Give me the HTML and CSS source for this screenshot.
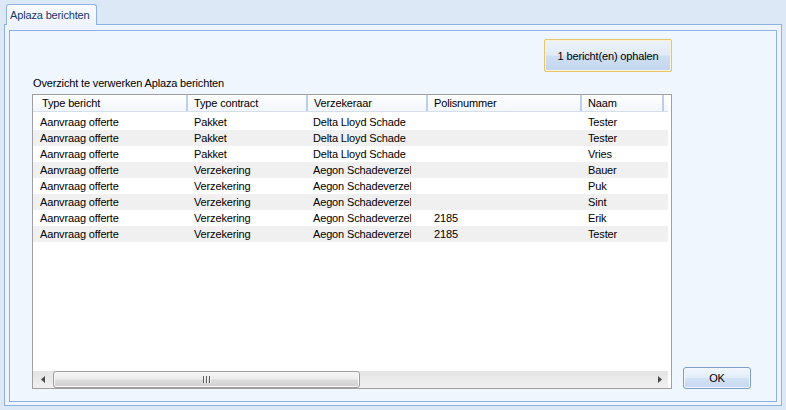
FILE: index.html
```html
<!DOCTYPE html>
<html>
<head>
<meta charset="utf-8">
<link rel="stylesheet" href="styles.css">
</head>
<body>
<div class="tabstrip"><div class="tab">Aplaza berichten</div></div>
<div class="tabpage">
  <div class="frame">
    <div class="main">
      <div class="toprow"><button class="btn btn-fetch">1 bericht(en) ophalen</button></div>
      <div class="label">Overzicht te verwerken Aplaza berichten</div>
      <div class="list">
        <div class="header">
          <div class="hcell c1">Type bericht</div>
          <div class="hcell">Type contract</div>
          <div class="hcell">Verzekeraar</div>
          <div class="hcell">Polisnummer</div>
          <div class="hcell">Naam</div>
        </div>
        <div class="rows">
          <div class="row"><div class="cell c1">Aanvraag offerte</div><div class="cell">Pakket</div><div class="cell c3">Delta Lloyd Schade</div><div class="cell"></div><div class="cell">Tester</div></div>
          <div class="row alt"><div class="cell c1">Aanvraag offerte</div><div class="cell">Pakket</div><div class="cell c3">Delta Lloyd Schade</div><div class="cell"></div><div class="cell">Tester</div></div>
          <div class="row"><div class="cell c1">Aanvraag offerte</div><div class="cell">Pakket</div><div class="cell c3">Delta Lloyd Schade</div><div class="cell"></div><div class="cell">Vries</div></div>
          <div class="row alt"><div class="cell c1">Aanvraag offerte</div><div class="cell">Verzekering</div><div class="cell c3">Aegon Schadeverzekeringen</div><div class="cell"></div><div class="cell">Bauer</div></div>
          <div class="row"><div class="cell c1">Aanvraag offerte</div><div class="cell">Verzekering</div><div class="cell c3">Aegon Schadeverzekeringen</div><div class="cell"></div><div class="cell">Puk</div></div>
          <div class="row alt"><div class="cell c1">Aanvraag offerte</div><div class="cell">Verzekering</div><div class="cell c3">Aegon Schadeverzekeringen</div><div class="cell"></div><div class="cell">Sint</div></div>
          <div class="row"><div class="cell c1">Aanvraag offerte</div><div class="cell">Verzekering</div><div class="cell c3">Aegon Schadeverzekeringen</div><div class="cell">2185</div><div class="cell">Erik</div></div>
          <div class="row alt"><div class="cell c1">Aanvraag offerte</div><div class="cell">Verzekering</div><div class="cell c3">Aegon Schadeverzekeringen</div><div class="cell">2185</div><div class="cell">Tester</div></div>
        </div>
        <div class="hscroll">
          <div class="sb-btn sb-left"><svg width="4" height="7" viewBox="0 0 4 7"><path d="M4 0 L0 3.5 L4 7 Z" fill="#4a4a4a"/></svg></div>
          <div class="sb-track">
            <div class="sb-thumb"><span class="grip"></span><span class="grip"></span><span class="grip"></span></div>
          </div>
          <div class="sb-btn sb-right"><svg width="4" height="7" viewBox="0 0 4 7"><path d="M0 0 L4 3.5 L0 7 Z" fill="#4a4a4a"/></svg></div>
        </div>
      </div>
    </div>
    <div class="side"><button class="btn btn-ok">OK</button></div>
  </div>
</div>
</body>
</html>
```

FILE: styles.css
```css
html, body {
  margin: 0;
  padding: 0;
}
body {
  width: 786px;
  height: 410px;
  overflow: hidden;
  background: #dde8f6;
  font-family: "Liberation Sans", Arial, sans-serif;
  font-size: 11px;
  letter-spacing: -0.15px;
  color: #000;
}
.tabstrip {
  display: flex;
  padding: 4px 0 0 6px;
  height: 20px;
}
.tab {
  position: relative;
  z-index: 2;
  box-sizing: border-box;
  width: 91px;
  height: 21px;
  border: 1px solid #8db2e3;
  border-bottom: none;
  border-radius: 3px 3px 0 0;
  background: linear-gradient(#f8fbff, #eef4fd);
  color: #15386e;
  padding: 2px 0 0 3px;
  line-height: 16px;
  white-space: nowrap;
}
.tabpage {
  position: relative;
  z-index: 1;
  box-sizing: border-box;
  margin: 0 4px;
  height: 382px;
  border: 1px solid #8db2e3;
  background: #eef4fd;
  padding: 5px 4px 3px 4px;
}
.frame {
  box-sizing: border-box;
  height: 100%;
  border: 1px solid #8db2e3;
  background: #f0f6fe;
  display: flex;
  align-items: flex-start;
  padding: 8px 0 0 22px;
}
.main {
  width: 640px;
  display: flex;
  flex-direction: column;
}
.toprow {
  display: flex;
  justify-content: flex-end;
}
.btn {
  font-family: "Liberation Sans", Arial, sans-serif;
  font-size: 11px;
  letter-spacing: -0.15px;
  color: #000;
  padding: 0;
  margin: 0;
  box-sizing: border-box;
  display: flex;
  align-items: center;
  justify-content: center;
}
.btn-fetch {
  width: 128px;
  height: 33px;
  border: 1px solid #e8c56a;
  border-radius: 2px;
  box-shadow: inset 0 0 0 1px #fbf3d6;
  background: linear-gradient(#edf3fb 0%, #e1ebf7 48%, #cfdff3 52%, #c3d6ef 100%);
}
.label {
  margin-top: 4px;
  line-height: 14px;
  height: 14px;
  padding-left: 1px;
  white-space: nowrap;
}
.list {
  margin-top: 4px;
  box-sizing: border-box;
  height: 295px;
  border: 1px solid #a0a0a0;
  background: #fff;
  display: flex;
  flex-direction: column;
  padding-right: 3px;
}
.header {
  display: grid;
  grid-template-columns: 155px 120px 120px 154px 82px;
  height: 16px;
  border-bottom: 1px solid #d5dfeb;
  background: linear-gradient(#ffffff, #f2f6fb);
}
.hcell {
  box-sizing: border-box;
  border-right: 2px solid #bccfe8;
  line-height: 16px;
  padding-left: 6px;
  white-space: nowrap;
  overflow: hidden;
}
.hcell.c1 {
  padding-left: 9px;
}
.rows {
  padding-top: 2px;
  display: flex;
  flex-direction: column;
}
.row {
  display: grid;
  grid-template-columns: 155px 120px 120px 154px 82px;
  height: 16px;
}
.row.alt {
  background: #f0f0f0;
}
.cell {
  box-sizing: border-box;
  line-height: 16px;
  padding-left: 6px;
  white-space: nowrap;
  overflow: hidden;
}
.cell.c1 {
  padding-left: 7px;
}
.cell.c3 {
  padding-left: 5px;
  margin-right: 17px;
  text-overflow: clip;
}
.hscroll {
  margin-top: auto;
  height: 17px;
  display: flex;
  background: linear-gradient(#e4e4e4, #f0f0f0);
}
.sb-btn {
  display: flex;
  align-items: center;
  justify-content: center;
}
.sb-left {
  width: 20px;
}
.sb-right {
  width: 17px;
}
.sb-track {
  flex: 1;
  display: flex;
  align-items: center;
}
.sb-thumb {
  box-sizing: border-box;
  width: 307px;
  height: 17px;
  border: 1px solid #9e9e9e;
  border-radius: 3px;
  background: linear-gradient(#f6f6f6 0%, #ececec 45%, #dcdcdc 55%, #d0d0d0 100%);
  box-shadow: inset 0 0 0 1px #f8f8f8;
  display: flex;
  align-items: center;
  justify-content: center;
  gap: 2px;
}
.grip {
  width: 1px;
  height: 7px;
  background: #5c5c5c;
  box-shadow: 1px 0 0 #f4f4f4;
}
.side {
  align-self: flex-start;
  margin-left: 11px;
  padding-top: 328px;
}
.btn-ok {
  width: 68px;
  height: 22px;
  border: 1px solid #7f9fcb;
  border-radius: 3px;
  box-shadow: inset 0 0 0 1px #f3f7fd;
  background: linear-gradient(#f1f6fc 0%, #e3edf9 48%, #d3e2f5 52%, #c5d9f1 100%);
}
```
